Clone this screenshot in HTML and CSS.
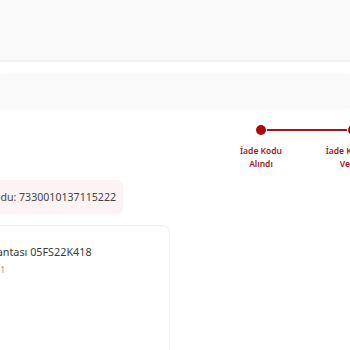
FILE: index.html
```html
<!DOCTYPE html>
<html lang="tr">
<head>
<meta charset="utf-8">
<link rel="stylesheet" href="styles.css">
</head>
<body>
<div class="topbar"></div>
<div class="subbar"></div>
<div class="steps">
  <div class="step done">
    <span class="dot"></span>
    <span class="label">İade Kodu<br>Alındı</span>
  </div>
  <div class="step">
    <span class="dot"></span>
    <span class="label">İade Kargoya<br>Verildi</span>
  </div>
</div>
<div class="code">İade Kodu: 7330010137115222</div>
<div class="card">
  <div class="card-body">
    <div class="name">Sırt Çantası 05FS22K418</div>
    <div class="qty">Miktar: 1</div>
  </div>
</div>
</body>
</html>
```
FILE: styles.css
```css
html, body {
  margin: 0;
  padding: 0;
  background: #fff;
  overflow: hidden;
  width: 350px;
  height: 350px;
  font-family: "Noto Sans", "Open Sans", sans-serif;
}
.topbar {
  height: 60px;
  background: #fafafa;
  border-bottom: 2px solid #f1f1f1;
}
.subbar {
  margin-top: 12px;
  height: 34px;
  background: #f9f9f9;
  box-shadow: 0 0 4px #f6f6f6;
}
.steps {
  display: flex;
  margin-top: 17px;
  margin-left: 215px;
  width: 200px;
}
.step {
  width: 92px;
  flex: none;
  display: flex;
  flex-direction: column;
  align-items: center;
  position: relative;
}
.step.done::after {
  content: "";
  position: absolute;
  top: 4px;
  left: 52px;
  width: 80px;
  height: 2px;
  background: #a3171c;
}
.dot {
  width: 10px;
  height: 10px;
  border-radius: 50%;
  background: #b0070f;
}
.label {
  margin-top: 9px;
  font-size: 8.5px;
  line-height: 13px;
  font-weight: 600;
  color: #a3171c;
  text-align: center;
  white-space: nowrap;
}
.code {
  margin-top: 10px;
  width: 116px;
  height: 34px;
  padding-right: 7px;
  background: #fcf4f4;
  border-radius: 0 6px 6px 0;
  display: flex;
  align-items: center;
  justify-content: flex-end;
  white-space: nowrap;
  overflow: hidden;
  font-size: 10.6px;
  color: #444;
}
.card {
  margin-top: 11px;
  width: 169px;
  height: 160px;
  border: 1px solid #efefef;
  border-left: none;
  border-radius: 0 7px 0 0;
  overflow: hidden;
}
.card-body {
  margin-left: -30px;
  padding-top: 18px;
}
.name {
  font-size: 10.8px;
  color: #3a3a3a;
  white-space: nowrap;
}
.qty {
  margin-top: 5px;
  font-size: 8.5px;
  color: #999;
  white-space: nowrap;
}
```
